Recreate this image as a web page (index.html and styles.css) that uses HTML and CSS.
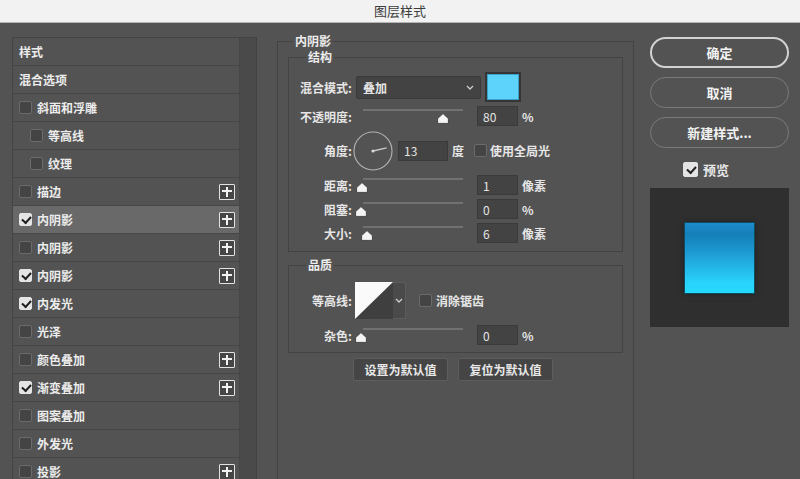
FILE: index.html
```html
<!DOCTYPE html>
<html lang="zh-CN">

<head>
  <meta charset="UTF-8">
  <meta name="viewport" content="width=device-width, initial-scale=1.0">
  <title>图层样式</title>
  <link rel="stylesheet" href="styles.css">
</head>

<body>
  <div class="title-bar">图层样式</div>

  <div class="dialog">
    <!-- 左侧：样式列表 -->
    <div class="style-list">
      <ul class="style-items">
        <li class="item">样式</li>
        <li class="item">混合选项</li>
        <li class="item"><span class="check"></span>斜面和浮雕</li>
        <li class="item sub"><span class="check"></span>等高线</li>
        <li class="item sub"><span class="check"></span>纹理</li>
        <li class="item"><span class="check"></span>描边<span class="add"></span></li>
        <li class="item active"><span class="check on"></span>内阴影<span class="add"></span></li>
        <li class="item"><span class="check"></span>内阴影<span class="add"></span></li>
        <li class="item"><span class="check on"></span>内阴影<span class="add"></span></li>
        <li class="item"><span class="check on"></span>内发光</li>
        <li class="item"><span class="check"></span>光泽</li>
        <li class="item"><span class="check"></span>颜色叠加<span class="add"></span></li>
        <li class="item"><span class="check on"></span>渐变叠加<span class="add"></span></li>
        <li class="item"><span class="check"></span>图案叠加</li>
        <li class="item"><span class="check"></span>外发光</li>
        <li class="item"><span class="check"></span>投影<span class="add"></span></li>
      </ul>
      <div class="scroll-track"></div>
    </div>

    <!-- 中间：内阴影设置 -->
    <fieldset class="group outer">
      <legend>内阴影</legend>

      <fieldset class="group structure">
        <legend>结构</legend>

        <div class="row blend-row">
          <span class="lbl">混合模式:</span>
          <div class="select">
            <span>叠加</span>
            <svg class="chevron" width="8" height="5" viewBox="0 0 8 5"><path d="M1 1 L4 4 L7 1" fill="none" stroke="#cfcfcf" stroke-width="1.3"/></svg>
          </div>
          <div class="color-swatch"></div>
        </div>

        <div class="row slider-row">
          <span class="lbl">不透明度:</span>
          <div class="slider">
            <div class="track"></div>
            <svg class="thumb" style="left: 87px" width="12" height="11" viewBox="0 0 12 11"><path d="M6 0.6 L11.4 5.6 V10.4 H0.6 V5.6 Z" fill="#f4f4f4" stroke="#2e2e2e" stroke-width="0.8" stroke-linejoin="round"/></svg>
          </div>
          <input class="num" type="text" value="80">
          <span class="unit">%</span>
        </div>

        <div class="row angle-row">
          <span class="lbl">角度:</span>
          <svg class="dial" width="40" height="40" viewBox="0 0 40 40">
            <circle cx="20" cy="20" r="19" fill="none" stroke="#b4b4b4" stroke-width="1.1"/>
            <line x1="20" y1="20" x2="33.6" y2="16.9" stroke="#c8c8c8" stroke-width="1.4"/>
            <circle cx="20" cy="20" r="1.6" fill="#d8d8d8"/>
          </svg>
          <input class="num wide" type="text" value="13">
          <span class="unit">度</span>
          <span class="check gap"></span>
          <span>使用全局光</span>
        </div>

        <div class="row slider-row">
          <span class="lbl">距离:</span>
          <div class="slider">
            <div class="track"></div>
            <svg class="thumb" style="left: 6px" width="12" height="11" viewBox="0 0 12 11"><path d="M6 0.6 L11.4 5.6 V10.4 H0.6 V5.6 Z" fill="#f4f4f4" stroke="#2e2e2e" stroke-width="0.8" stroke-linejoin="round"/></svg>
          </div>
          <input class="num" type="text" value="1">
          <span class="unit">像素</span>
        </div>

        <div class="row slider-row">
          <span class="lbl">阻塞:</span>
          <div class="slider">
            <div class="track"></div>
            <svg class="thumb" style="left: 5px" width="12" height="11" viewBox="0 0 12 11"><path d="M6 0.6 L11.4 5.6 V10.4 H0.6 V5.6 Z" fill="#f4f4f4" stroke="#2e2e2e" stroke-width="0.8" stroke-linejoin="round"/></svg>
          </div>
          <input class="num" type="text" value="0">
          <span class="unit">%</span>
        </div>

        <div class="row slider-row">
          <span class="lbl">大小:</span>
          <div class="slider">
            <div class="track"></div>
            <svg class="thumb" style="left: 11px" width="12" height="11" viewBox="0 0 12 11"><path d="M6 0.6 L11.4 5.6 V10.4 H0.6 V5.6 Z" fill="#f4f4f4" stroke="#2e2e2e" stroke-width="0.8" stroke-linejoin="round"/></svg>
          </div>
          <input class="num" type="text" value="6">
          <span class="unit">像素</span>
        </div>
      </fieldset>

      <fieldset class="group quality">
        <legend>品质</legend>

        <div class="row contour-row">
          <span class="lbl">等高线:</span>
          <div class="contour">
            <svg class="contour-preview" width="38" height="37" viewBox="0 0 38 37">
              <rect width="38" height="37" fill="#3f3f3f"/>
              <polygon points="0,0 38,0 0,37" fill="#fafafa"/>
            </svg>
            <div class="contour-arrow">
              <svg width="8" height="5" viewBox="0 0 8 5"><path d="M1 1 L4 4 L7 1" fill="none" stroke="#cfcfcf" stroke-width="1.3"/></svg>
            </div>
          </div>
          <span class="check gap-lg"></span>
          <span>消除锯齿</span>
        </div>

        <div class="row slider-row">
          <span class="lbl">杂色:</span>
          <div class="slider">
            <div class="track"></div>
            <svg class="thumb" style="left: 5px" width="12" height="11" viewBox="0 0 12 11"><path d="M6 0.6 L11.4 5.6 V10.4 H0.6 V5.6 Z" fill="#f4f4f4" stroke="#2e2e2e" stroke-width="0.8" stroke-linejoin="round"/></svg>
          </div>
          <input class="num" type="text" value="0">
          <span class="unit">%</span>
        </div>
      </fieldset>

      <div class="defaults">
        <button class="small-btn">设置为默认值</button>
        <button class="small-btn">复位为默认值</button>
      </div>
    </fieldset>

    <!-- 右侧：按钮与预览 -->
    <div class="actions">
      <button class="btn primary">确定</button>
      <button class="btn">取消</button>
      <button class="btn">新建样式...</button>
      <div class="preview-toggle">
        <span class="check on big"></span>
        <span>预览</span>
      </div>
      <div class="preview">
        <div class="preview-swatch"></div>
      </div>
    </div>
  </div>
</body>

</html>
```

FILE: styles.css
```css
* {
  box-sizing: border-box;
}

body {
  margin: 0;
  height: 479px;
  overflow: hidden;
  background-color: #535353;
  color: #e6e6e6;
  font-family: "Noto Sans CJK SC", "Noto Sans", sans-serif;
  font-size: 12px;
  font-weight: 600;
}

.title-bar {
  height: 23px;
  line-height: 22px;
  text-align: center;
  background-color: #f2f2f2;
  border-bottom: 1px solid #b5b5b5;
  color: #3c3c3c;
  font-size: 13px;
  font-weight: normal;
}

.dialog {
  display: flex;
  align-items: flex-start;
  padding: 10px 0 0 12px;
}

/* 样式列表 */
.style-list {
  display: flex;
  width: 245px;
  height: 450px;
  margin-top: 4px;
  border-top: 1px solid #444;
  border-left: 1px solid #444;
}

.style-items {
  list-style: none;
  margin: 0;
  padding: 0;
  width: 226px;
}

.item {
  display: flex;
  align-items: center;
  height: 28px;
  padding-left: 6px;
  border-bottom: 1px solid #464646;
  color: #ececec;
}

.item.sub {
  padding-left: 17px;
}

.item.active {
  background-color: #696969;
}

.scroll-track {
  width: 18px;
  background-color: #4a4a4a;
  border-left: 1px solid #474747;
  border-right: 1px solid #424242;
}

.check {
  position: relative;
  flex-shrink: 0;
  width: 13px;
  height: 13px;
  margin-right: 5px;
  background-color: #444;
  border: 1px solid #6b6b6b;
  border-radius: 2px;
}

.check.on {
  background-color: #e4e4e4;
  border-color: #e4e4e4;
}

.check.on::after {
  content: '';
  position: absolute;
  left: 2px;
  top: 2px;
  width: 7px;
  height: 4px;
  border-left: 2px solid #1e1e1e;
  border-bottom: 2px solid #1e1e1e;
  transform: rotate(-48deg);
}

.add {
  position: relative;
  width: 16px;
  height: 16px;
  margin-left: auto;
  margin-right: 4px;
  background-color: #464646;
  border: 1.5px solid #e2e2e2;
  border-radius: 1px;
}

.add::before,
.add::after {
  content: '';
  position: absolute;
  background-color: #f2f2f2;
}

.add::before {
  left: 2px;
  right: 2px;
  top: 5.5px;
  height: 2px;
}

.add::after {
  top: 2px;
  bottom: 2px;
  left: 5.5px;
  width: 2px;
}

/* 分组框 */
.group {
  margin: 0;
  padding: 0;
  border: 1px solid #434343;
  min-width: 0;
}

.group legend {
  padding: 0 2px;
  line-height: 16px;
  color: #ececec;
}

.outer {
  width: 357px;
  height: 460px;
  margin-left: 20px;
  padding: 0 10px;
}

.outer > legend {
  margin-left: 5px;
}

.structure > legend,
.quality > legend {
  margin-left: 17px;
}

.structure {
  display: flex;
  flex-direction: column;
  gap: 4px;
  padding: 7px 0 8px;
}

.quality {
  display: flex;
  flex-direction: column;
  gap: 6px;
  margin-top: 5px;
  padding: 9px 0 7px;
}

.row {
  display: flex;
  align-items: center;
  height: 20px;
}

.lbl {
  flex-shrink: 0;
  width: 63px;
  margin-right: 4px;
  text-align: right;
  white-space: nowrap;
}

.blend-row {
  height: 30px;
}

.select {
  display: flex;
  align-items: center;
  justify-content: space-between;
  width: 125px;
  height: 23px;
  padding: 0 6px;
  background-color: #434343;
  border: 1px solid #3a3a3a;
  border-radius: 2px;
}

.color-swatch {
  width: 36px;
  height: 30px;
  margin-left: 4px;
  background-color: #5dd2fb;
  border: 2px solid #353535;
  box-shadow: inset 0 0 0 1px #3aa2c9;
}

.slider {
  position: relative;
  width: 121px;
  height: 20px;
}

.track {
  position: absolute;
  left: 7px;
  top: 3px;
  width: 100px;
  height: 2px;
  background-color: #717171;
}

.thumb {
  position: absolute;
  top: 7px;
  margin-left: -6px;
}

.num {
  width: 41px;
  height: 20px;
  padding: 0 5px;
  background-color: #434343;
  border: 1px solid #3a3a3a;
  border-radius: 0;
  color: #e4e4e4;
  font-family: "Noto Sans CJK SC", "Noto Sans", sans-serif;
  font-size: 12px;
  outline: none;
}

.num.wide {
  width: 50px;
  margin-left: 5px;
}

.unit {
  margin-left: 4px;
}

.angle-row {
  height: 41px;
}

.dial {
  flex-shrink: 0;
  margin-left: -3px;
}

.check.gap {
  margin-left: 10px;
  margin-right: 3px;
}

.check.gap-lg {
  margin-left: 13px;
  margin-right: 4px;
}

.contour-row {
  height: 37px;
}

.contour {
  display: flex;
  margin-left: -1px;
}

.contour-preview {
  display: block;
}

.contour-arrow {
  display: flex;
  align-items: center;
  justify-content: center;
  width: 13px;
  height: 37px;
  background-color: #4a4a4a;
  border: 1px solid #5c5c5c;
  border-left: none;
}

.defaults {
  display: flex;
  gap: 10px;
  margin-top: 5px;
  padding-left: 65px;
}

.small-btn {
  width: 95px;
  height: 23px;
  padding: 0;
  background-color: #454545;
  border: 1px solid #5e5e5e;
  border-radius: 2px;
  color: #e8e8e8;
  font-family: "Noto Sans CJK SC", "Noto Sans", sans-serif;
  font-size: 12px;
  font-weight: 600;
}

/* 右侧按钮 */
.actions {
  display: flex;
  flex-direction: column;
  gap: 9px;
  width: 139px;
  margin-top: 4px;
  margin-left: 16px;
}

.btn {
  height: 31px;
  padding: 0;
  background: transparent;
  border: 1.5px solid #7a7a7a;
  border-radius: 16px;
  color: #f2f2f2;
  font-family: "Noto Sans CJK SC", "Noto Sans", sans-serif;
  font-size: 13px;
  font-weight: 600;
}

.btn.primary {
  border: 2px solid #d2d2d2;
}

.preview-toggle {
  display: flex;
  align-items: center;
  height: 16px;
  margin-top: 4px;
  padding-left: 33px;
  font-size: 13px;
}

.check.big {
  width: 15px;
  height: 15px;
}

.check.big::after {
  left: 3px;
  top: 3px;
}

.preview {
  display: flex;
  align-items: center;
  justify-content: center;
  height: 139px;
  margin-top: 2px;
  background-color: #2f2f2f;
}

.preview-swatch {
  width: 69px;
  height: 70px;
  background: linear-gradient(to bottom, #1d8ccb 0%, #157fb9 16%, #1c98d0 40%, #24b8e8 65%, #29d3fb 85%, #25d9ff 100%);
  box-shadow: 0 0 0 1px #0f4d63, 0 0 6px rgba(0, 0, 0, 0.5);
}
```
